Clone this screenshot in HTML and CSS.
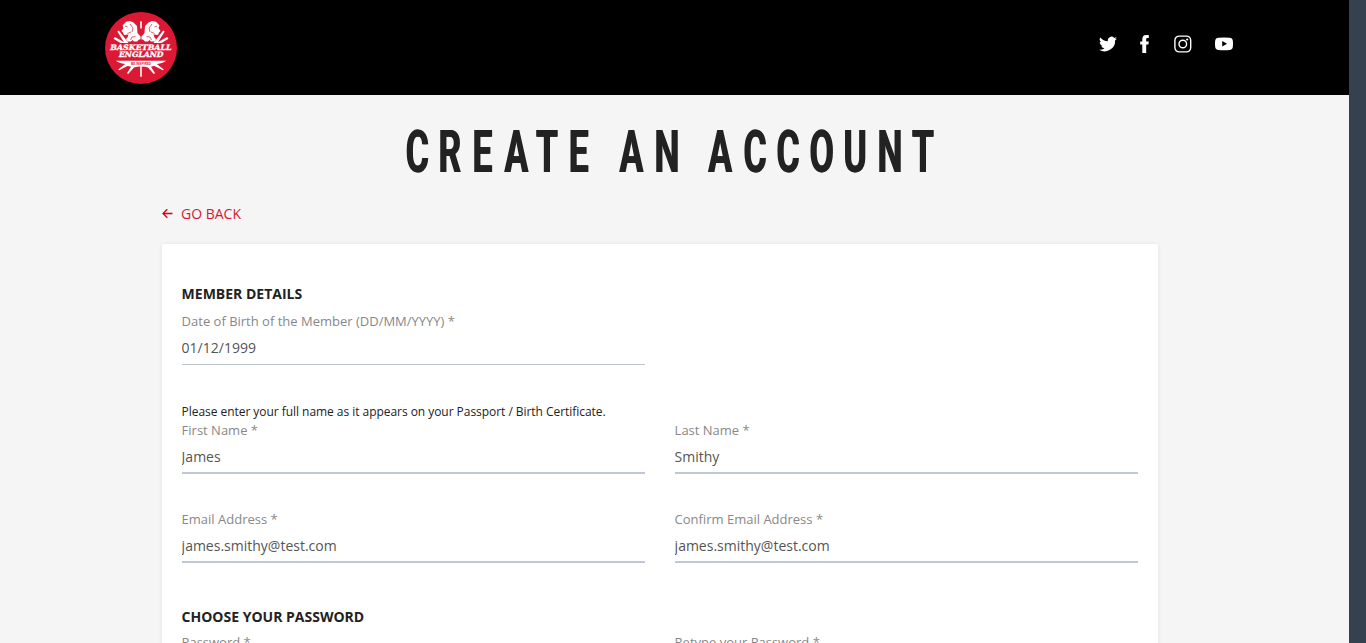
FILE: index.html
```html
<!DOCTYPE html>
<html lang="en">
<head>
<meta charset="utf-8">
<title>Create an account</title>
<link rel="stylesheet" href="styles.css">
</head>
<body>
<div class="shell">
<div class="page">
  <header class="header">
    <svg class="logo" viewBox="0 0 72 72" role="img" aria-label="Basketball England">
      <circle cx="36" cy="36" r="36" fill="#dc1935"/>
      <g fill="#fff">
        <path d="M35.200 9.300h1.600v7.200h-1.600z"/>
        <path id="lion" d="M35.500 24.500l-3-3.500-.5-7-3.500-3.500-3.500-1.500-4 .8-3.500 3.700 1 2.500-2 3 1.500 1.500 1 2.500 4.500-.5-1 3-1.500 1.500 1 2.500h4l1.500-1.500 1.500 1.500h3l2-2h1.500z"/>
        <use href="#lion" transform="matrix(-1 0 0 1 72 0)"/>
        <path id="rays" d="M8.500 26.800l1.400-1.800 10.600 6h-5zM12.300 19.500l1.500-1L23.500 31h-4z"/>
        <use href="#rays" transform="matrix(-1 0 0 1 72 0)"/>
        <path d="M10.700 48.700h50.600q-3 2.300-9.500 3.300l7 5.500-1 .8-8.300-4.300q-2 0-3.500.8l4 6.500-1.200.7-5.800-6.500q-3-.8-6.200-1v10.200h-1.600V54.500q-3.200.2-6.200 1l-5.800 6.500-1.200-.7 4-6.500q-1.500-.8-3.500-.8l-8.300 4.300-1-.8 7-5.500q-6.500-1-9.500-3.300z"/>
      </g>
      <g fill="none" stroke="#dc1935" stroke-width=".7">
        <path id="mane" d="M20 14l2.500.8M25 12l3 4-1 4M22.500 21.500l3.500-1.500M25.500 28l1.500-3 3.500-.5"/>
        <use href="#mane" transform="matrix(-1 0 0 1 72 0)"/>
      </g>
      <text class="logo-name" x="5.200" y="37.500" textLength="61.500" lengthAdjust="spacingAndGlyphs">BASKETBALL</text>
      <text class="logo-name" x="14" y="45.300" textLength="44.500" lengthAdjust="spacingAndGlyphs">ENGLAND</text>
      <text class="logo-tag" x="26" y="53" textLength="20" lengthAdjust="spacingAndGlyphs">BE INSPIRED</text>
    </svg>
    <nav class="social">
      <svg width="18" height="18" viewBox="0 0 24 24"><path fill="#fff" d="M24 4.600a10 10 0 0 1-2.800.8 5 5 0 0 0 2.200-2.700 10 10 0 0 1-3.100 1.200 4.900 4.900 0 0 0-8.400 4.500A14 14 0 0 1 1.700 3.200a4.900 4.900 0 0 0 1.500 6.500 5 5 0 0 1-2.200-.6v.1a4.900 4.900 0 0 0 3.900 4.800 5 5 0 0 1-2.200.1 4.900 4.900 0 0 0 4.600 3.400A9.900 9.900 0 0 1 0 19.500 14 14 0 0 0 21.500 7.100 10 10 0 0 0 24 4.600z"/></svg>
      <svg width="9" height="18" viewBox="0 0 9 18"><path fill="#fff" d="M2.300 18V9.500H.2v-3h2.100V4.300C2.300 1.500 3.600 0 6.200 0h2.600v3H7.500C6.400 3 6.200 3.500 6.200 4.500v2h2.600l-.4 3H6.200V18z"/></svg>
      <svg width="18" height="18" viewBox="0 0 18 18"><g fill="none" stroke="#fff" stroke-width="1.400"><rect x=".9" y="1.100" width="15.800" height="15.800" rx="4.300"/><circle cx="8.800" cy="9" r="3.800"/></g><circle cx="13.200" cy="4.500" r="1.100" fill="#fff"/></svg>
      <svg width="18" height="18" viewBox="0 0 18 18"><path fill="#fff" fill-rule="evenodd" d="M3.500 2.700Q9 2.200 14.500 2.700Q17.500 2.900 17.800 5.500Q18.200 8.800 17.800 12Q17.500 14.700 14.500 14.900Q9 15.400 3.500 14.900Q.5 14.700.2 12Q-.2 8.800.2 5.500Q.5 2.900 3.500 2.700zM7.200 6.100v5.400l4.800-2.700z"/></svg>
    </nav>
  </header>
  <main class="content">
    <h1 class="title">
      <svg width="548" height="76" viewBox="0 0 548 76"><text class="title-text" transform="scale(.6 1)" y="60" x="15.400 69.900 126.800 179.800 232.600 287 332 371.500 430 475 519.800 578.300 633.300 688.300 744.800 801.500 859.300">CREATE AN ACCOUNT</text></svg>
    </h1>
    <a class="back"><svg width="11" height="10" viewBox="0 0 11 10"><path d="M10.500 4.500H1M5.300.2L1 4.500l4.300 4.300" fill="none" stroke="#d0021b" stroke-width="1.300"/></svg>GO BACK</a>
    <form class="card">
      <h2 class="section">MEMBER DETAILS</h2>
      <div class="row dob">
        <label class="field thin">Date of Birth of the Member (DD/MM/YYYY) *<input value="01/12/1999"></label>
      </div>
      <p class="hint">Please enter your full name as it appears on your Passport / Birth Certificate.</p>
      <div class="row">
        <label class="field">First Name *<input value="James"></label>
        <label class="field">Last Name *<input value="Smithy"></label>
      </div>
      <div class="row">
        <label class="field">Email Address *<input value="james.smithy@test.com"></label>
        <label class="field">Confirm Email Address *<input value="james.smithy@test.com"></label>
      </div>
      <h2 class="section password">CHOOSE YOUR PASSWORD</h2>
      <div class="row">
        <label class="field">Password *<input type="password"></label>
        <label class="field">Retype your Password *<input type="password"></label>
      </div>
    </form>
  </main>
</div>
<div class="rail"></div>
</div>
</body>
</html>
```

FILE: styles.css
```css
* { box-sizing: border-box; }
body { margin: 0; overflow: hidden; font-family: "Open Sans", sans-serif; color: #222; }
.shell { display: flex; height: 643px; overflow: hidden; }
.page { width: 1349px; background: #f5f5f5; overflow: hidden; }
.rail { flex: 1; background: #35414f; }
.header { height: 95px; background: #000; padding: 12px 116px 0 105px; display: flex; justify-content: space-between; }
.logo { width: 72px; height: 72px; }
.logo-name { font: italic bold 7.4px "DejaVu Serif", serif; fill: #fff; stroke: #fff; stroke-width: .3px; }
.logo-tag { font: bold 3.6px "Liberation Sans", sans-serif; fill: #dc1935; }
.social { display: flex; align-items: center; height: 18px; margin-top: 23px; }
.social svg:nth-child(2) { margin-left: 23px; }
.social svg:nth-child(3) { margin-left: 25px; }
.social svg:nth-child(4) { margin-left: 23px; }
.content { padding-left: 162px; }
.title { margin: 0 0 0 234px; padding-top: 17px; height: 93px; }
.title svg { display: block; filter: drop-shadow(1.500px 0 0 #222); }
.title-text { font: bold 59px Roboto, sans-serif; fill: #222; }
.back { display: flex; align-items: center; gap: 8px; margin-top: 16px; height: 20px; font-size: 14px; line-height: 20px; color: #d31938; }
.card { width: 996px; height: 500px; margin-top: 20px; padding: 40px 20px 0 19.600px; background: #fff; border-radius: 2px; box-shadow: 0 0 4px rgba(0, 0, 0, .07); }
.section { margin: 0; font-size: 14px; font-weight: 700; line-height: 20px; height: 20px; }
.row { display: grid; grid-template-columns: 463px 463px; column-gap: 30px; height: 89px; }
.dob { margin-top: 8px; }
.field { font-size: 13px; line-height: 18px; color: #888; }
.field input { display: block; width: 463px; height: 35px; margin: 0; padding: 2px 0 0; border: 0; border-bottom: 2px solid #bdc8d8; background: none; font: 14px "Open Sans", sans-serif; color: #555; }
.field.thin input { border-bottom: 1px solid #b9c4cc; padding-top: 0; height: 35px; }
.hint { margin: 2px 0 0; font-size: 12px; line-height: 18px; letter-spacing: -.045px; color: #222; }
.password { margin-top: 8px; margin-bottom: 6px; }
```
